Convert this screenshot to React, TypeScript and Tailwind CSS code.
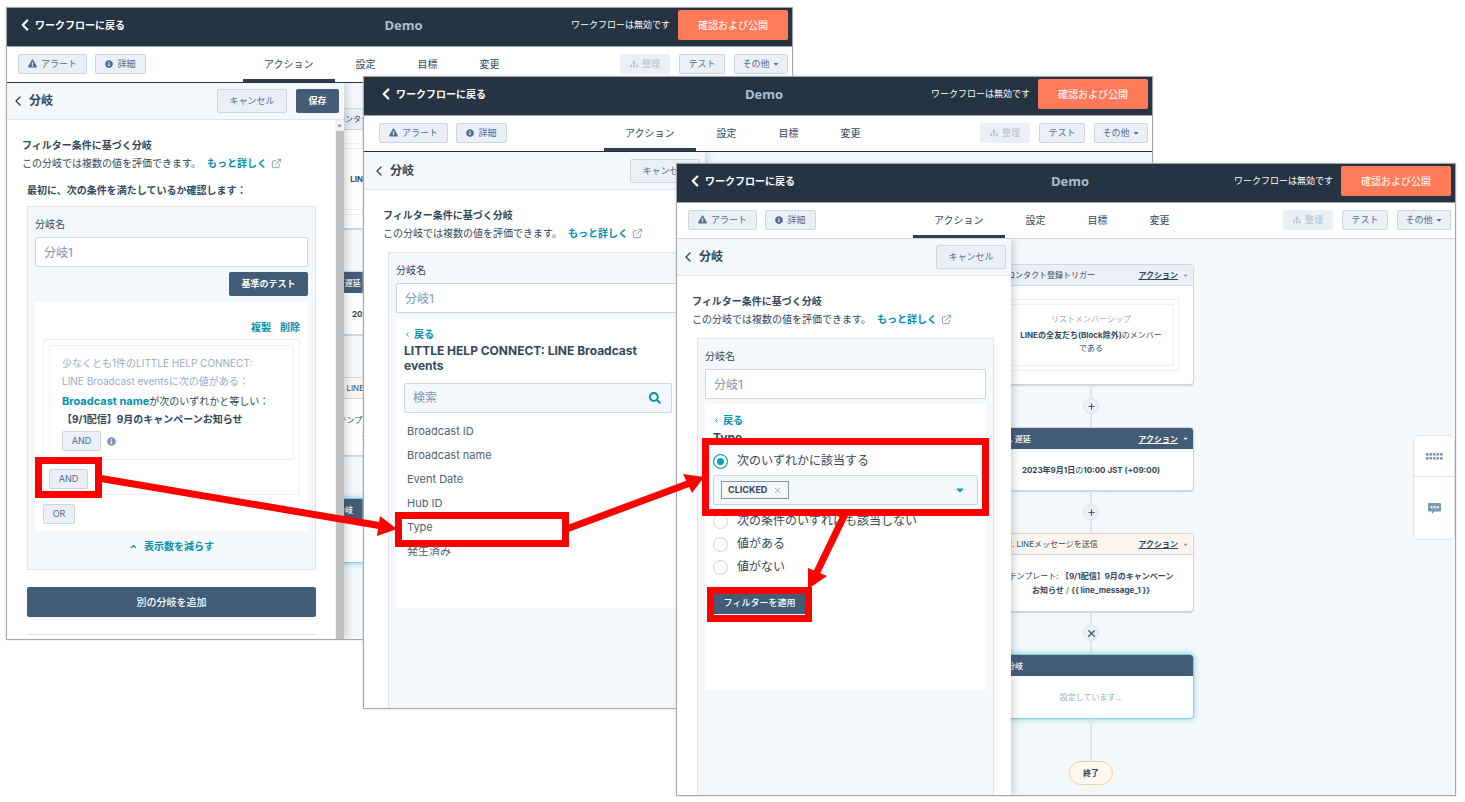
import type { ReactNode } from "react";
import { FaCaretDown, FaExclamationTriangle, FaInfoCircle, FaSearch, FaSitemap } from "react-icons/fa";
import { FiChevronLeft, FiChevronUp, FiExternalLink, FiPlus, FiX } from "react-icons/fi";

const toolButton =
  "flex h-5 items-center justify-center rounded-[2px] border border-[#cbd6e2] bg-[#eaf0f6] text-[9px] text-[#506e91]";

function TopBar() {
  return (
    <header className="grid h-[39px] shrink-0 grid-cols-[1fr_auto_1fr] items-center border-b border-[#9aa3ab] bg-[#253342] pr-1 pb-1 pl-3 text-white group-data-[inset]/window:pl-4">
      <a href="#workflows" className="flex items-center gap-px text-[10px] font-bold">
        <FiChevronLeft className="-ml-[3px] size-[18px]" strokeWidth={3} />
        ワークフローに戻る
      </a>
      <h1 className="pt-0.5 font-['Open_Sans',sans-serif] text-[13px] font-bold text-[#a9bfd8]">Demo</h1>
      <div className="flex items-center justify-end gap-2">
        <span className="text-[9px]">ワークフローは無効です</span>
        <button type="button" className="h-[30px] rounded-[2px] bg-[#ff7a59] px-5 text-[10px]">
          確認および公開
        </button>
      </div>
    </header>
  );
}

function ToolBar({ line }: { line: string }) {
  return (
    <div className={`flex h-9 shrink-0 items-stretch border-b bg-white pr-1 pl-[11px] group-data-[inset]/window:pl-[15px] ${line}`}>
      <div className="flex w-[225px] items-center gap-2 pb-0.5">
        <button type="button" className={`${toolButton} w-[69px] gap-1`}>
          <FaExclamationTriangle className="size-[9px]" />
          アラート
        </button>
        <button type="button" className={`${toolButton} w-[51px] gap-1`}>
          <FaInfoCircle className="size-2" />
          詳細
        </button>
      </div>
      <nav className="flex flex-1 text-[10px] text-[#33475b]">
        <a href="#actions" className="flex items-center border-b-[3px] border-[#2d3e50] px-[21px] pt-0.5">アクション</a>
        <a href="#settings" className="flex items-center px-[21px] pb-px">設定</a>
        <a href="#goals" className="flex items-center px-[21px] pb-px">目標</a>
        <a href="#changes" className="flex items-center px-[21px] pb-px">変更</a>
      </nav>
      <div className="flex items-center gap-[9px] pb-0.5">
        <button type="button" disabled className="flex h-5 w-[50px] items-center justify-center gap-1 rounded-[2px] bg-[#eaf0f6] text-[9px] text-[#b0c1d4]">
          <FaSitemap className="size-2" />
          整理
        </button>
        <button type="button" className={`${toolButton} w-[46px]`}>テスト</button>
        <button type="button" className={`${toolButton} w-[54px] gap-0.5`}>
          その他
          <FaCaretDown className="size-2" />
        </button>
      </div>
    </div>
  );
}

function Connector({ children }: { children: ReactNode }) {
  return (
    <div className="flex h-[42px] flex-col items-center">
      <span className="w-0.5 flex-1 bg-[#dfe3eb]" />
      <button type="button" aria-label="ステップを操作" className="flex size-4 items-center justify-center rounded-full border border-[#dbe2ea] bg-[#eaf0f6] text-[#425b76]">
        {children}
      </button>
      <span className="w-0.5 flex-1 bg-[#dfe3eb]" />
    </div>
  );
}

function StepCard({
  title,
  head,
  active = false,
  menu = true,
  caret = "text-[#7c98b6]",
  children,
}: {
  title: string;
  head: string;
  active?: boolean;
  menu?: boolean;
  caret?: string;
  children: ReactNode;
}) {
  return (
    <section
      className={`overflow-hidden rounded-[4px] border bg-white text-center text-[8px] leading-[14px] text-[#33475b] ${
        active ? "border-[#7fd1de] shadow-[0_0_6px_#7fd1de]" : "border-[#cbd6e2] shadow-[0_1px_1px_#cbd6e2]"
      }`}
    >
      <div className={`flex h-[21px] items-center justify-between pr-1 pl-[18px] ${head}`}>
        <span>{title}</span>
        {menu && (
          <button type="button" className="flex items-center gap-1 font-bold">
            <span className="underline">アクション</span>
            <FaCaretDown className={`size-[7px] ${caret}`} />
          </button>
        )}
      </div>
      {children}
    </section>
  );
}

function Flow() {
  return (
    <div className="ml-[311px] flex w-[206px] flex-col pt-[25px]">
      <StepCard title="コンタクト登録トリガー" head="border-b border-[#cbd6e2] bg-[#eaf0f6]">
        <div className="px-3.5 py-[13px]">
          <div className="border border-[#eaf0f6] p-1">
            <div className="border border-[#eaf0f6] px-2 pt-2 pb-2.5 leading-[13px]">
              <p className="text-[#99acc2]">リストメンバーシップ</p>
              <p className="mt-[3px]">
                <b>LINEの全友だち(Block除外)</b>のメンバーである
              </p>
            </div>
          </div>
        </div>
      </StepCard>
      <Connector><FiPlus className="size-[9px]" strokeWidth={3} /></Connector>
      <StepCard title="1. 遅延" head="bg-[#425b76] font-medium text-white" caret="text-white">
        <p className="pt-3.5 pb-[13px] font-bold">2023年9月1日<span className="font-normal">の</span>10:00 JST (+09:00)</p>
      </StepCard>
      <Connector><FiPlus className="size-[9px]" strokeWidth={3} /></Connector>
      <StepCard title="2. LINEメッセージを送信" head="border-b border-[#cbd6e2] bg-[#fef6ee]">
        <p className="px-[18px] py-3.5">
          テンプレート: <b>【9/1配信】9月のキャンペーンお知らせ</b> / <b>{"{{ line_message_1 }}"}</b>
        </p>
      </StepCard>
      <Connector><FiX className="size-[11px]" strokeWidth={3} /></Connector>
      <StepCard title="分岐" head="bg-[#425b76] font-medium text-white" active menu={false}>
        <p className="py-3.5 text-[#99acc2]">設定しています...</p>
      </StepCard>
      <span className="h-[42px] w-0.5 self-center bg-[#dfe3eb]" />
      <span className="self-center rounded-full border border-[#f0cf9a] bg-[#fef8f0] px-[13px] text-[8px] leading-[22px] font-bold text-[#33475b]">
        終了
      </span>
    </div>
  );
}

function ScrollBar() {
  return (
    <div aria-hidden="true" className="flex w-[9px] shrink-0 flex-col items-center bg-[#f1f1f1]">
      <FaCaretDown className="my-0.5 size-[7px] rotate-180 text-[#8a8a8a]" />
      <span className="w-2 flex-1 bg-[#c1c1c1]" />
    </div>
  );
}

function Drawer({
  width,
  save = false,
  scroll = false,
  children,
}: {
  width: string;
  save?: boolean;
  scroll?: boolean;
  children: ReactNode;
}) {
  return (
    <aside className={`absolute inset-y-0 left-0 flex flex-col bg-white shadow-[2px_0_8px_rgba(45,62,80,0.25)] ${width}`}>
      <div className="flex h-[37px] shrink-0 items-center border-b border-[#dfe3eb] bg-[#f5f8fa] pr-[5px] pl-[3px] text-[#33475b] group-data-[inset]/window:h-[38px] group-data-[inset]/window:pl-[7px]">
        <button type="button" aria-label="戻る"><FiChevronLeft className="size-4" strokeWidth={2} /></button>
        <h2 className="ml-[3px] flex-1 text-[12px] font-bold">分岐</h2>
        <button type="button" className="h-6 w-[70px] rounded-[2px] border border-[#cbd6e2] bg-[#eaf0f6] text-[9px] text-[#506e91]">
          キャンセル
        </button>
        {save && (
          <button type="button" className="ml-[9px] h-6 w-[43px] rounded-[2px] bg-[#425b76] text-[9px] font-bold text-white">
            保存
          </button>
        )}
      </div>
      <div className="flex flex-1">
        <div
          className={`flex min-w-0 flex-1 flex-col pt-4 pl-[15px] text-[10px] leading-[18px] text-[#33475b] group-data-[inset]/window:pl-[19px] ${
            scroll ? "pr-[19px]" : "pr-[17px]"
          }`}
        >
          <h3 className="font-bold">フィルター条件に基づく分岐</h3>
          <p className="flex items-center whitespace-nowrap">
            この分岐では複数の値を評価できます。
            <a href="#more" className="ml-1.5 flex items-center gap-1 font-bold text-[#0091ae]">
              もっと詳しく
              <FiExternalLink className="size-[11px] text-[#7c98b6]" />
            </a>
          </p>
          {children}
        </div>
        {scroll && <ScrollBar />}
      </div>
    </aside>
  );
}

function BranchName({ id }: { id: string }) {
  return (
    <>
      <label htmlFor={id} className="block">分岐名</label>
      <input
        id={id}
        placeholder="分岐1"
        className="mt-1 block h-[30px] w-full rounded-[2px] border border-[#cbd6e2] bg-white px-2 text-[12px] placeholder:text-[#7c98b6]"
      />
    </>
  );
}

function BackLink() {
  return (
    <a href="#back" className="flex items-center gap-[3px] font-bold text-[#0091ae]">
      <FiChevronLeft className="size-[7px]" strokeWidth={3} />
      戻る
    </a>
  );
}

function Window({
  place,
  line,
  inset = false,
  flow = true,
  drawer,
  children,
}: {
  place: string;
  line: string;
  inset?: boolean;
  flow?: boolean;
  drawer: ReactNode;
  children?: ReactNode;
}) {
  return (
    <section
      data-inset={inset ? "" : undefined}
      className={`group/window absolute flex flex-col overflow-hidden border border-[#a6a6a6] bg-white shadow-[0_0_2px_#ccd2d8] ${place}`}
    >
      <TopBar />
      <ToolBar line={line} />
      <div className="relative flex-1 overflow-hidden bg-[#f5f8fa]">
        {flow && <Flow />}
        {drawer}
        {children}
      </div>
    </section>
  );
}

const logicButton =
  "flex h-5 items-center justify-center rounded-[2px] border border-[#cbd6e2] bg-[#eaf0f6] text-[9px] text-[#506e91]";

function ConditionDrawer() {
  return (
    <Drawer width="w-[337px]" save scroll>
      <p className="mt-[9px] ml-[5px] font-bold">最初に、次の条件を満たしているか確認します：</p>
      <div className="mt-[7px] ml-[5px] border border-[#dfe3eb] bg-[#f5f8fa] px-[7px] pt-2 pb-3.5">
        <BranchName id="branch-name-1" />
        <button type="button" className="mt-[5px] ml-auto block h-6 w-[79px] rounded-[2px] bg-[#425b76] text-[9px] font-bold text-white">
          基準のテスト
        </button>
        <div className="mt-1.5 bg-white px-2 pt-4 pb-[7px]">
          <div className="flex justify-end gap-[9px] font-bold text-[#0091ae]">
            <a href="#clone">複製</a>
            <a href="#delete">削除</a>
          </div>
          <div className="mt-[3px] rounded-[2px] border border-[#eaf0f6] p-[5px]">
            <div className="rounded-[2px] border border-[#eaf0f6] px-3 pt-2 pb-2 whitespace-nowrap">
              <p className="text-[#99acc2]">
                少なくとも1件のLITTLE HELP CONNECT:
                <br />
                LINE Broadcast eventsに次の値がある：
              </p>
              <p className="mt-0.5">
                <a href="#property" className="text-[11px] font-bold text-[#0091ae]">Broadcast name</a>が次のいずれかと等しい：
                <br />
                <b>【9/1配信】9月のキャンペーンお知らせ</b>
              </p>
              <div className="mt-[3px] flex items-center gap-1.5">
                <button type="button" className={`${logicButton} w-[39px]`}>AND</button>
                <FaInfoCircle className="size-[9px] text-[#7c98b6]" />
              </div>
            </div>
            <button type="button" className={`${logicButton} mt-[9px] w-[39px]`}>AND</button>
          </div>
          <button type="button" className={`${logicButton} mt-[9px] w-8`}>OR</button>
        </div>
        <a href="#less" className="mt-1.5 flex items-center justify-center gap-1.5 font-bold text-[#0091ae]">
          <FiChevronUp className="size-[9px]" strokeWidth={3} />
          表示数を減らす
        </a>
      </div>
      <button type="button" className="mt-[17px] ml-[5px] h-[30px] shrink-0 rounded-[2px] bg-[#425b76] font-medium text-white">
        別の分岐を追加
      </button>
      <hr className="mt-[17px] ml-[5px] border-[#dfe3eb]" />
    </Drawer>
  );
}

const properties = ["Broadcast ID", "Broadcast name", "Event Date", "Hub ID", "Type", "発生済み"];

function PropertyDrawer() {
  return (
    <Drawer width="w-[341px]">
      <div className="mt-2.5 ml-[5px] flex-1 border border-b-0 border-[#dfe3eb] bg-[#f5f8fa] px-[7px] pt-2">
        <BranchName id="branch-name-2" />
        <div className="mt-[5px] min-h-[290px] bg-white px-2 pt-[7px]">
          <BackLink />
          <h3 className="text-[12px] leading-[15px] font-bold">LITTLE HELP CONNECT: LINE Broadcast events</h3>
          <div className="mt-2.5 flex h-[30px] items-center rounded-[2px] border border-[#cbd6e2] bg-[#f5f8fa] px-2">
            <input
              aria-label="検索"
              placeholder="検索"
              className="min-w-0 flex-1 bg-transparent text-[12px] placeholder:text-[#7c98b6]"
            />
            <FaSearch className="mr-0.5 size-3 text-[#0091ae]" />
          </div>
          <ul className="mt-1.5 px-[3px] text-[11px] leading-6 text-[#506274]">
            {properties.map((name) => (
              <li key={name}>{name}</li>
            ))}
          </ul>
        </div>
      </div>
    </Drawer>
  );
}

function Choice({ id, label, checked = false }: { id: string; label: string; checked?: boolean }) {
  return (
    <div className="flex h-5 items-center gap-[9px] text-[12px]">
      <input
        type="radio"
        id={id}
        name="operator"
        defaultChecked={checked}
        className="size-[15px] appearance-none rounded-full border border-[#cbd6e2] bg-white checked:border-[#00a4bd] checked:bg-[#00a4bd] checked:shadow-[inset_0_0_0_3px_#fff]"
      />
      <label htmlFor={id}>{label}</label>
    </div>
  );
}

function TypeDrawer() {
  return (
    <Drawer width="w-[334px]">
      <div className="mt-2.5 ml-[5px] flex-1 border border-b-0 border-[#dfe3eb] bg-[#f5f8fa] px-[7px] pt-2">
        <BranchName id="branch-name-3" />
        <div className="mt-[5px] min-h-[286px] bg-white px-2 pt-[7px]">
          <BackLink />
          <h3 className="text-[12px] font-bold">Type</h3>
          <div className="mt-1 flex flex-col">
            <Choice id="any-of" label="次のいずれかに該当する" checked />
            <div className="mt-1 mb-1.5 flex h-[30px] items-center justify-between rounded-[2px] border border-[#cbd6e2] bg-[#f5f8fa] pr-[11px] pl-[7px]">
              <span className="flex h-[18px] items-center gap-1.5 border border-[#7c98b6] px-1.5 text-[9px] font-bold">
                CLICKED
                <button type="button" aria-label="CLICKEDを削除"><FiX className="size-[9px] text-[#7c98b6]" strokeWidth={2} /></button>
              </span>
              <button type="button" aria-label="値を選択"><FaCaretDown className="size-3 text-[#00a4bd]" /></button>
            </div>
            <div className="flex flex-col gap-[3px]">
              <Choice id="none-of" label="次の条件のいずれにも該当しない" />
              <Choice id="has-value" label="値がある" />
              <Choice id="no-value" label="値がない" />
            </div>
          </div>
          <button type="button" className="mt-[15px] h-[22px] w-[93px] bg-[#425b76] text-[9px] font-medium text-white">
            フィルターを適用
          </button>
        </div>
      </div>
    </Drawer>
  );
}

function SideTools() {
  return (
    <div className="absolute top-[196px] right-0 flex w-[42px] flex-col rounded-[5px] border border-[#dfe3eb] bg-white text-[#7c98b6]">
      <button type="button" aria-label="ミニマップ" className="flex h-[41px] items-center justify-center border-b border-[#dfe3eb]">
        <svg viewBox="0 0 17 7" className="h-[7px] w-[17px]" fill="currentColor">
          {[0, 3.5, 7, 10.5, 14].map((x) => (
            <g key={x}>
              <rect x={x} y="0" width="2.6" height="2.6" />
              <rect x={x} y="4" width="2.6" height="2.6" />
            </g>
          ))}
        </svg>
      </button>
      <button type="button" aria-label="コメント" className="flex h-[62px] items-center justify-center">
        <svg viewBox="0 0 13 11" className="h-[11px] w-[13px]">
          <path d="M1 0h11a1 1 0 0 1 1 1v6.500a1 1 0 0 1-1 1H6.500L4 11V8.500H1a1 1 0 0 1-1-1V1a1 1 0 0 1 1-1z" fill="#7c98b6" />
          <path d="M2.500 3.200h2v2h-2zM5.600 3.200h2v2h-2zM8.700 3.200h2v2h-2z" fill="#fff" />
        </svg>
      </button>
    </div>
  );
}

function Annotations() {
  return (
    <svg
      viewBox="0 0 1465 802"
      className="pointer-events-none absolute top-0 left-0 h-[802px] w-[1465px]"
      stroke="#ff0000"
      strokeWidth="7"
      fill="none"
      aria-hidden="true"
    >
      <rect x="38.500" y="460.500" width="60" height="34" />
      <rect x="398.500" y="515.500" width="167" height="28" />
      <rect x="705.500" y="441.500" width="280" height="71" />
      <rect x="710.500" y="590.500" width="98" height="28" />
      <path d="M101 478.500L382 526M568 528.500L690 483M844.500 515L816 574" />
      <path d="M380 516L397 529L377 536ZM683 474L704 477L692 493ZM808 568L827 576L808 589Z" fill="#ff0000" stroke="none" />
    </svg>
  );
}

export default function App() {
  return (
    <main
      lang="ja"
      className="relative min-h-screen overflow-hidden bg-white font-['Inter','Noto_Sans_CJK_JP',sans-serif]"
    >
      <Window place="top-[7px] left-[6px] h-[633px] w-[787px]" line="border-[#2b2f33]" drawer={<ConditionDrawer />} />
      <Window
        place="top-[76px] left-[363px] h-[633px] w-[790px]"
        line="border-[#2b2f33]"
        inset
        flow={false}
        drawer={<PropertyDrawer />}
      />
      <Window place="top-[163px] left-[676px] h-[633px] w-[780px]" line="border-[#cbd6e2]" drawer={<TypeDrawer />}>
        <SideTools />
      </Window>
      <Annotations />
    </main>
  );
}
